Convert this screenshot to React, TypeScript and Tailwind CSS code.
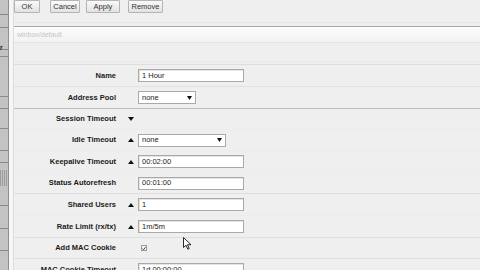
import React from "react";

type Row = {
  label: string;
  h: string;
  arrow?: "up" | "down";
  kind: "input" | "select" | "none" | "check";
  value?: string;
  w?: string;
  line?: string;
};

const rows: Row[] = [
  { label: "Name", h: "h-[22px]", kind: "input", value: "1 Hour", line: "border-[#e2e2e2]" },
  { label: "Address Pool", h: "h-[22px]", kind: "select", value: "none", w: "w-[58px]", line: "border-[#bdbdbd]" },
  { label: "Session Timeout", h: "h-[21px]", kind: "none", arrow: "down", line: "border-[#ececec]" },
  { label: "Idle Timeout", h: "h-[21px]", kind: "select", value: "none", w: "w-[88px]", arrow: "up", line: "border-[#ececec]" },
  { label: "Keepalive Timeout", h: "h-[22px]", kind: "input", value: "00:02:00", arrow: "up", line: "border-[#ececec]" },
  { label: "Status Autorefresh", h: "h-[21px]", kind: "input", value: "00:01:00", line: "border-[#dedede]" },
  { label: "Shared Users", h: "h-[22px]", kind: "input", value: "1", arrow: "up", line: "border-[#ececec]" },
  { label: "Rate Limit (rx/tx)", h: "h-[22px]", kind: "input", value: "1m/5m", arrow: "up", line: "border-[#dedede]" },
  { label: "Add MAC Cookie", h: "h-[21px]", kind: "check", line: "border-[#dedede]" },
  { label: "MAC Cookie Timeout", h: "h-[22px]", kind: "input", value: "1d 00:00:00", line: "border-[#ececec]" },
];

function Arrow({ dir }: { dir: "up" | "down" }) {
  return (
    <svg width="6" height="4" viewBox="0 0 6 4">
      {dir === "up" ? <polygon points="0,4 6,4 3,0" fill="#111" /> : <polygon points="0,0 6,0 3,4" fill="#111" />}
    </svg>
  );
}

function Field({ row }: { row: Row }) {
  if (row.kind === "input") {
    return (
      <div className="w-[106px] h-[13px] bg-white border border-[#a9a9a9] shadow-[inset_1px_1px_0_#e4e4e4] flex items-center pl-[3px] text-[7.5px] text-[#222] leading-none">
        {row.value}
      </div>
    );
  }
  if (row.kind === "select") {
    return (
      <div className={`${row.w} h-[13px] bg-white border border-[#a9a9a9] flex items-center justify-between pl-[3px] pr-[3px] text-[7.5px] text-[#222] leading-none`}>
        <span>{row.value}</span>
        <svg width="5" height="4" viewBox="0 0 5 4">
          <polygon points="0,0 5,0 2.5,4" fill="#111" />
        </svg>
      </div>
    );
  }
  if (row.kind === "check") {
    return (
      <div className="ml-[3px] w-[6px] h-[6px] border border-[#9a9a9a] bg-[#f4f4f4] flex items-center justify-center">
        <svg width="5" height="5" viewBox="0 0 5 5">
          <polyline points="0.5,2.5 2,4 4.5,0.8" fill="none" stroke="#222" strokeWidth="1" />
        </svg>
      </div>
    );
  }
  return null;
}

function Btn({ label, w, ml }: { label: string; w: string; ml: string }) {
  return (
    <div
      className={`${w} ${ml} h-[13px] border border-[#b4b4b4] rounded-[1px] bg-gradient-to-b from-[#fafafa] to-[#e2e2e2] flex items-center justify-center text-[7.5px] text-[#333] leading-none`}
    >
      {label}
    </div>
  );
}

export default function App() {
  const sideLines = [14, 27, 49, 56, 96, 108, 128, 150, 162, 205, 228, 250];
  return (
    <div className="w-[480px] h-[270px] overflow-hidden flex bg-[#efefef] relative font-['Liberation_Sans',Arial,sans-serif]">
      {/* sidebar */}
      <div className="w-[9px] h-full bg-[#c3c3c3] border-r border-[#8f8f8f] relative shrink-0">
        {sideLines.map((y) => (
          <div key={y} className="absolute left-0 right-0 h-px bg-[#8a8a8a]" style={{ top: y }} />
        ))}
        <div className="absolute left-0 top-[44px] text-[7px] font-bold text-[#222] leading-none">r</div>
        <div className="absolute left-0 right-0 top-[170px] h-[16px] bg-[repeating-linear-gradient(90deg,#9c9c9c_0,#9c9c9c_1px,#c3c3c3_1px,#c3c3c3_2px)]" />
      </div>
      <div className="w-[5px] h-full bg-[#f6f6f6] border-r border-[#dcdcdc] shrink-0" />

      {/* main */}
      <div className="flex-1 flex flex-col">
        <div className="h-[14px] flex items-start shrink-0">
          <Btn label="OK" w="w-[26px]" ml="ml-0" />
          <Btn label="Cancel" w="w-[30px]" ml="ml-[10px]" />
          <Btn label="Apply" w="w-[34px]" ml="ml-[6px]" />
          <Btn label="Remove" w="w-[35px]" ml="ml-[8px]" />
        </div>
        <div className="h-[13px] shrink-0 border-b border-[#a6a6a6] flex flex-col justify-end">
          <div className="h-px bg-[#e6e6e6] mb-[3px]" />
        </div>
        <div className="h-[16px] shrink-0 bg-gradient-to-b from-[#fcfcfc] to-[#f2f2f2] border-b border-[#e4e4e4] flex items-center pl-[3px]">
          <span className="text-[7px] text-[#c6c6c6] leading-none">winbox/default</span>
        </div>
        <div className="h-[22px] shrink-0 border-b border-[#dedede] flex flex-col justify-end">
          <div className="h-px bg-[#e8e8e8] mb-[2px]" />
        </div>

        {rows.map((row, i) => (
          <div key={i} className={`${row.h} shrink-0 flex items-center border-b ${row.line}`}>
            <div className="w-[102px] text-right text-[7.5px] font-bold text-[#1a1a1a] leading-none whitespace-nowrap">
              {row.label}
            </div>
            <div className="w-[22px] flex justify-end pr-[4px]">
              {row.arrow ? <Arrow dir={row.arrow} /> : null}
            </div>
            <Field row={row} />
          </div>
        ))}
      </div>

      {/* mouse cursor */}
      <svg className="absolute left-[183px] top-[237px]" width="9" height="13" viewBox="0 0 9 13">
        <polygon points="0.5,0.5 0.5,10.5 3,8.2 4.8,12.2 6.2,11.6 4.5,7.7 8,7.7" fill="#fff" stroke="#111" strokeWidth="0.9" />
      </svg>
    </div>
  );
}
